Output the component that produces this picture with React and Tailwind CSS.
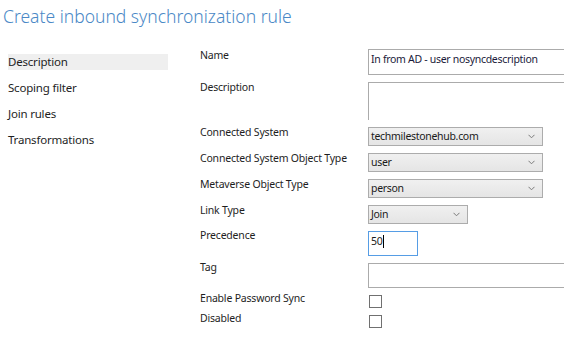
import React from 'react';

const NAV = ['Description', 'Scoping filter', 'Join rules', 'Transformations'];

function Chevron() {
  return (
    <svg width="7" height="5" viewBox="0 0 7 5" className="shrink-0">
      <path d="M0.5 0.8 L3.5 3.8 L6.5 0.8" fill="none" stroke="#7a7a7a" strokeWidth="1" />
    </svg>
  );
}

function Select({ value, width }) {
  return (
    <div
      className={`flex h-[19px] items-center justify-between border border-[#acacac] bg-gradient-to-b from-[#f0f0f0] to-[#e5e5e5] pl-[2px] pr-[7px] text-[10.5px] leading-[17px] tracking-[-0.3px] text-[#1a1a1a] ${width}`}
    >
      <span>{value}</span>
      <Chevron />
    </div>
  );
}

function Row({ label, offset = '-mt-[2px]', children }) {
  return (
    <div className="flex items-start">
      <div className={`w-[168px] shrink-0 text-[10.5px] leading-[14px] tracking-[-0.2px] text-[#1e1e1e] ${offset}`}>
        {label}
      </div>
      <div className="flex-1">{children}</div>
    </div>
  );
}

export default function App() {
  return (
    <div
      className="h-[351px] w-[564px] overflow-hidden bg-white"
      style={{ fontFamily: '"Segoe UI", "Noto Sans", sans-serif' }}
    >
      <div className="h-[40px] pl-[3px] pt-[4px] text-[17.5px] font-light leading-[24px] text-[#4a88c6] whitespace-nowrap">
        Create inbound synchronization rule
      </div>

      <div className="flex">
        <div className="ml-[8px] mt-[14px] flex w-[160px] shrink-0 flex-col gap-[10px]">
          {NAV.map((item, i) => (
            <div
              key={item}
              className={`h-[16px] text-[11.5px] leading-[16px] tracking-[-0.2px] text-[#1e1e1e] ${i === 0 ? 'bg-[#efefef]' : ''}`}
            >
              {item}
            </div>
          ))}
        </div>

        <div className="ml-[32px] mt-[9px] flex flex-1 flex-col gap-[7px]">
          <Row label="Name" offset="-mt-[1px]">
            <div className="h-[26px] border border-r-0 border-[#ababab] pl-[2px] text-[10.5px] leading-[18px] tracking-[-0.3px] text-[#1a1a3a] whitespace-nowrap">
              In from AD - user nosyncdescription
            </div>
          </Row>
          <Row label="Description">
            <div className="h-[38px] border border-b-0 border-r-0 border-[#ababab]" />
          </Row>
          <Row label="Connected System">
            <Select value="techmilestonehub.com" width="w-[175px]" />
          </Row>
          <Row label="Connected System Object Type">
            <Select value="user" width="w-[175px]" />
          </Row>
          <Row label="Metaverse Object Type">
            <Select value="person" width="w-[175px]" />
          </Row>
          <Row label="Link Type">
            <Select value="Join" width="w-[100px]" />
          </Row>
          <Row label="Precedence" offset="-mt-[3px]">
            <div className="flex h-[25px] w-[50px] items-start border border-[#569de5] pl-[2px] pt-[1px] text-[10.5px] leading-[16px] tracking-[-0.3px] text-[#1a1a1a]">
              50
              <span className="ml-[1px] mt-[2px] h-[13px] w-[1px] bg-black" />
            </div>
          </Row>
          <Row label="Tag" offset="-mt-[3px]">
            <div className="h-[25px] border border-r-0 border-[#ababab]" />
          </Row>
          <Row label="Enable Password Sync" offset="-mt-[4px]">
            <div className="ml-[1px] h-[13px] w-[13px] border border-[#707070] bg-white" />
          </Row>
          <Row label="Disabled" offset="-mt-[4px]">
            <div className="ml-[1px] h-[13px] w-[13px] border border-[#707070] bg-white" />
          </Row>
        </div>
      </div>
    </div>
  );
}
